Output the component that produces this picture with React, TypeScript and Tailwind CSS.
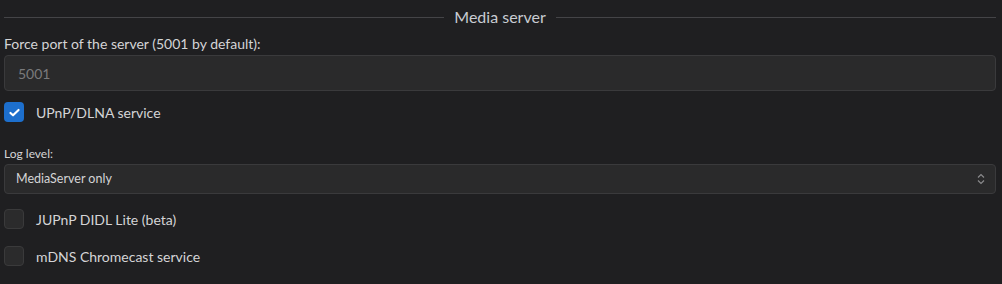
import React from "react";

function Check({ checked }: { checked?: boolean }) {
  return checked ? (
    <div className="w-[20px] h-[20px] rounded-[4px] bg-[#1d6fcd] flex items-center justify-center shrink-0">
      <svg width="13" height="13" viewBox="0 0 16 16" fill="none">
        <path d="M3 8.5l3.2 3L13 4.8" stroke="white" strokeWidth="2.6" strokeLinecap="round" strokeLinejoin="round" />
      </svg>
    </div>
  ) : (
    <div className="w-[20px] h-[20px] rounded-[4px] bg-[#2b2b2c] border border-[#3a3a3b] shrink-0" />
  );
}

export default function App() {
  return (
    <div className="w-[1002px] h-[284px] bg-[#1f1f21] text-[#d4d4d6] pl-[4px] pr-[6px] pt-[7px]" style={{ fontFamily: "Lato, 'Noto Sans', sans-serif" }}>
      <div className="flex items-center gap-[10px] h-[20px]">
        <div className="flex-1 h-px bg-[#444447]" />
        <div className="text-[16px] text-[#c8ccd2] leading-none">Media server</div>
        <div className="flex-1 h-px bg-[#444447]" />
      </div>
      <div className="mt-[7px] text-[14px] leading-[20px]">Force port of the server (5001 by default):</div>
      <div className="mt-[1px] h-[36px] rounded-[4px] bg-[#2a2a2b] border border-[#3a3a3c] flex items-center pl-[13px] text-[14px] text-[#7a7a7c]">5001</div>
      <div className="mt-[11px] flex items-center gap-[12px] h-[20px]">
        <Check checked />
        <span className="text-[14px]">UPnP/DLNA service</span>
      </div>
      <div className="mt-[23px] text-[12px] leading-[18px]">Log level:</div>
      <div className="mt-[1px] h-[30px] rounded-[4px] bg-[#2a2a2b] border border-[#3a3a3c] flex items-center pl-[11px] pr-[10px] text-[12.5px] text-[#d4d4d6]">
        <span className="flex-1">MediaServer only</span>
        <svg width="8" height="12" viewBox="0 0 8 12" fill="none">
          <path d="M1 4.5L4 1.5L7 4.5M1 7.5L4 10.5L7 7.5" stroke="#8a8a8c" strokeWidth="1.2" />
        </svg>
      </div>
      <div className="mt-[15px] flex items-center gap-[12px] h-[20px]">
        <Check />
        <span className="text-[14px]">JUPnP DIDL Lite (beta)</span>
      </div>
      <div className="mt-[17px] flex items-center gap-[12px] h-[20px]">
        <Check />
        <span className="text-[14px]">mDNS Chromecast service</span>
      </div>
    </div>
  );
}
